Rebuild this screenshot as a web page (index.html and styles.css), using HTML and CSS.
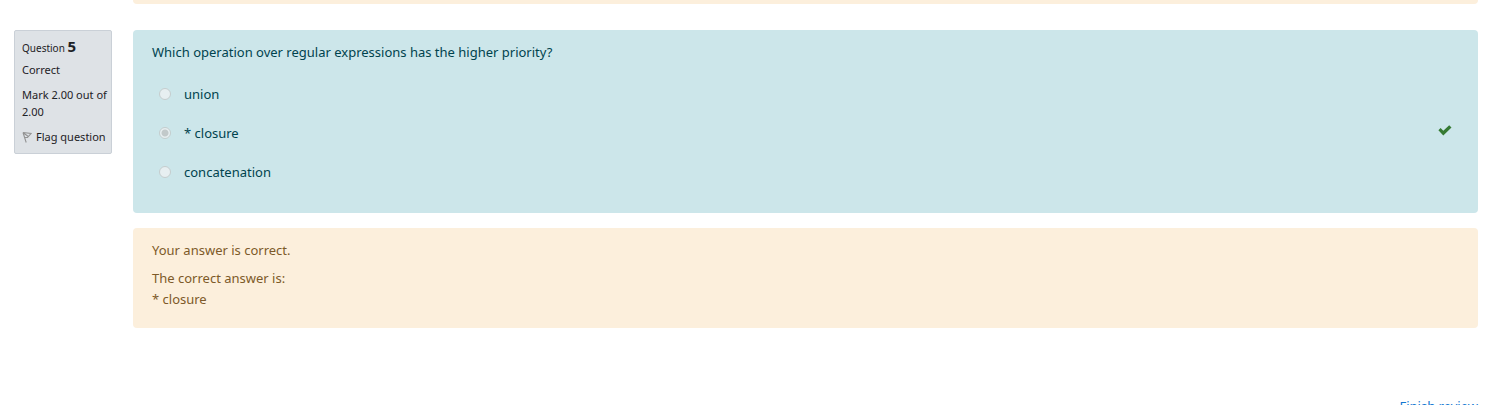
FILE: index.html
```html
<!DOCTYPE html>
<html lang="en">
<head>
<meta charset="utf-8">
<title>Quiz review</title>
<link rel="stylesheet" href="styles.css">
</head>
<body>
<main class="review">
  <div class="question question-previous">
    <div class="feedback feedback-end"></div>
  </div>
  <section class="question">
    <aside class="info">
      <h3 class="info-title">Question <span class="info-number">5</span></h3>
      <p class="info-state">Correct</p>
      <p class="info-grade">Mark 2.00 out of 2.00</p>
      <button class="flag" type="button">
        <svg class="flag-icon" viewBox="0 0 10 12" aria-hidden="true">
          <path d="M1 1.5 9 2.5 5.5 6.5 3 6.5M1 1.5 4.2 11.5M1.5 2 6 5.2" fill="none" stroke="#929292" stroke-width="1.1"/>
        </svg>
        <span>Flag question</span>
      </button>
    </aside>
    <div class="content">
      <fieldset class="formulation">
        <legend class="prompt">Which operation over regular expressions has the higher priority?</legend>
        <div class="answer">
          <input class="radio" type="radio" name="q5" id="a0" disabled>
          <label class="choice" for="a0">union</label>
        </div>
        <div class="answer">
          <input class="radio" type="radio" name="q5" id="a1" checked disabled>
          <label class="choice" for="a1">* closure</label>
          <svg class="check" viewBox="0 0 14 11" role="img" aria-label="Correct">
            <path d="M.4 5.2 2.6 3 5.3 5.7 11.2.3 13.5 2.6 5.3 10.6Z" fill="#357a32"/>
          </svg>
        </div>
        <div class="answer">
          <input class="radio" type="radio" name="q5" id="a2" disabled>
          <label class="choice" for="a2">concatenation</label>
        </div>
      </fieldset>
      <div class="feedback">
        <p class="feedback-line">Your answer is correct.</p>
        <p class="feedback-line">The correct answer is:<br>* closure</p>
      </div>
    </div>
  </section>
  <nav class="submit"><a class="finish" href="#">Finish review</a></nav>
</main>
</body>
</html>
```
FILE: styles.css
```css
* { box-sizing: border-box; }

html { overflow: hidden; }

body {
  margin: 0;
  background: #fff;
  color: #1d2125;
  font: 13px/21px "Noto Sans", "Open Sans", sans-serif;
}

p, h3 { margin: 0; }

.review { padding: 0 14px; }

.question {
  display: grid;
  grid-template-columns: 98px minmax(0, 1fr);
  column-gap: 21px;
  align-items: start;
}

.question-previous { margin-bottom: 26px; }

.info {
  padding: 6px 4px 8px 7px;
  border: 1px solid #cad0d7;
  border-radius: 2px;
  background: #dee2e6;
  font-size: 11px;
  line-height: 17px;
}

.info-title {
  font-size: 10px;
  font-weight: 400;
  line-height: 19px;
}

.info-number {
  font-size: 15px;
  font-weight: 700;
}

.info-state { margin-top: 3px; }

.info-grade { margin: 8px 0; }

.flag {
  display: flex;
  align-items: center;
  gap: 4px;
  padding: 0;
  border: 0;
  background: none;
  color: inherit;
  font: inherit;
  white-space: nowrap;
}

.flag-icon {
  width: 10px;
  height: 12px;
}

.content {
  display: grid;
  gap: 15px;
}

.formulation {
  min-width: 0;
  margin: 0;
  padding: 12px 19px 22px;
  border: 0;
  border-radius: 4px;
  background: #cce6ea;
  color: #00434e;
}

.prompt {
  float: left;
  width: 100%;
  margin-bottom: 11px;
  padding: 0;
}

.answer {
  display: flex;
  clear: both;
  align-items: center;
  height: 39px;
  padding: 0 7px;
}

.radio {
  appearance: none;
  width: 12px;
  height: 12px;
  margin: 0 13px 0 0;
  border: 1px solid #c5cdce;
  border-radius: 50%;
  background: #e7eff1;
}

.radio:checked {
  background: radial-gradient(circle, #c2c9ca 3px, #e7eff1 4px);
}

.choice { padding-top: 2px; }

.check {
  width: 14px;
  height: 11px;
  margin: 0 0 4px auto;
}

.feedback {
  padding: 12px 19px 11px;
  border-radius: 4px;
  background: #fcefdc;
  color: #7d5a29;
}

.feedback-end {
  grid-column: 2;
  height: 4px;
  padding: 0;
  border-radius: 0 0 4px 4px;
}

.feedback-line { margin-bottom: 7px; }

.submit {
  display: flex;
  justify-content: flex-end;
  margin-top: 68px;
}

.finish {
  color: #1177d1;
  text-decoration: none;
}
```
